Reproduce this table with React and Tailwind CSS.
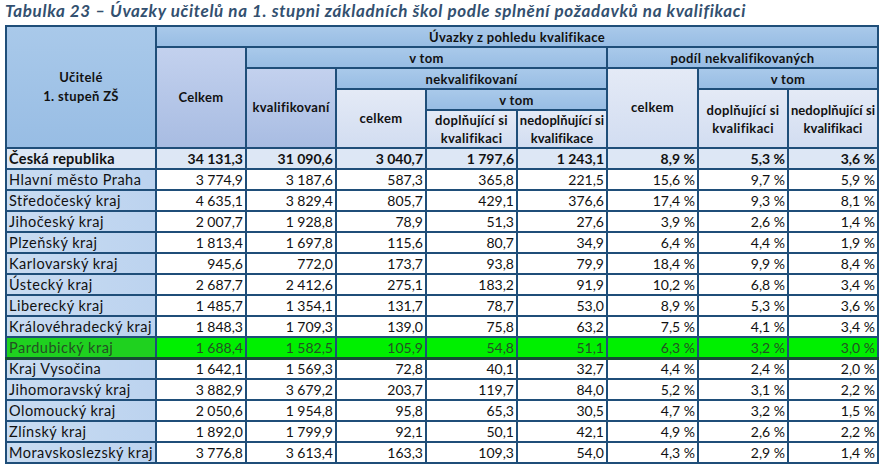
import React from "react";

const rows = [
  ["Česká republika", "34 131,3", "31 090,6", "3 040,7", "1 797,6", "1 243,1", "8,9 %", "5,3 %", "3,6 %"],
  ["Hlavní město Praha", "3 774,9", "3 187,6", "587,3", "365,8", "221,5", "15,6 %", "9,7 %", "5,9 %"],
  ["Středočeský kraj", "4 635,1", "3 829,4", "805,7", "429,1", "376,6", "17,4 %", "9,3 %", "8,1 %"],
  ["Jihočeský kraj", "2 007,7", "1 928,8", "78,9", "51,3", "27,6", "3,9 %", "2,6 %", "1,4 %"],
  ["Plzeňský kraj", "1 813,4", "1 697,8", "115,6", "80,7", "34,9", "6,4 %", "4,4 %", "1,9 %"],
  ["Karlovarský kraj", "945,6", "772,0", "173,7", "93,8", "79,9", "18,4 %", "9,9 %", "8,4 %"],
  ["Ústecký kraj", "2 687,7", "2 412,6", "275,1", "183,2", "91,9", "10,2 %", "6,8 %", "3,4 %"],
  ["Liberecký kraj", "1 485,7", "1 354,1", "131,7", "78,7", "53,0", "8,9 %", "5,3 %", "3,6 %"],
  ["Královéhradecký kraj", "1 848,3", "1 709,3", "139,0", "75,8", "63,2", "7,5 %", "4,1 %", "3,4 %"],
  ["Pardubický kraj", "1 688,4", "1 582,5", "105,9", "54,8", "51,1", "6,3 %", "3,2 %", "3,0 %"],
  ["Kraj Vysočina", "1 642,1", "1 569,3", "72,8", "40,1", "32,7", "4,4 %", "2,4 %", "2,0 %"],
  ["Jihomoravský kraj", "3 882,9", "3 679,2", "203,7", "119,7", "84,0", "5,2 %", "3,1 %", "2,2 %"],
  ["Olomoucký kraj", "2 050,6", "1 954,8", "95,8", "65,3", "30,5", "4,7 %", "3,2 %", "1,5 %"],
  ["Zlínský kraj", "1 892,0", "1 799,9", "92,1", "50,1", "42,1", "4,9 %", "2,6 %", "2,2 %"],
  ["Moravskoslezský kraj", "3 776,8", "3 613,4", "163,3", "109,3", "54,0", "4,3 %", "2,9 %", "1,4 %"],
];

const nb = (s) => s.replace(/ /g, "\u00a0");

const B = "border-2 border-[#1f4e79]";
const base = `${B} text-center align-middle font-bold px-0 py-0 whitespace-nowrap`;
const blue = `${base} bg-gradient-to-b from-[#a9c9ea] to-[#98bde4] leading-[16px]`;
const lav = `${base} bg-gradient-to-b from-[#c3d1ee] to-[#a8bce2]`;
const light = `${base} bg-gradient-to-b from-[#e4eaf6] to-[#d2ddf1]`;

export default function App() {
  return (
    <div className="w-[883px] h-[469px] bg-white overflow-hidden text-[#111]" style={{ fontFamily: "Lato, 'Liberation Sans', sans-serif" }}>
      <div className="h-[25px] pl-[5px] text-[17px] leading-[22px] font-bold italic tracking-[0.65px] text-[#33506f] whitespace-nowrap">
        Tabulka 23 – Úvazky učitelů na 1. stupni základních škol podle splnění požadavků na kvalifikaci
      </div>
      <table className="ml-[5px] border-collapse table-fixed w-[872px] text-[13px] tracking-[0.35px]">
        <colgroup>
          <col className="w-[150px]" />
          <col className="w-[90px]" />
          <col className="w-[90px]" />
          <col className="w-[90px]" />
          <col className="w-[91px]" />
          <col className="w-[90px]" />
          <col className="w-[91px]" />
          <col className="w-[90px]" />
          <col className="w-[90px]" />
        </colgroup>
        <thead>
          <tr className="h-[21px]">
            <th rowSpan={5} className={`${blue} leading-[19px]`}>
              Učitelé
              <br />
              1. stupeň ZŠ
            </th>
            <th colSpan={8} className={blue}>Úvazky z pohledu kvalifikace</th>
          </tr>
          <tr className="h-[21px]">
            <th rowSpan={4} className={lav}>Celkem</th>
            <th colSpan={4} className={blue}>v tom</th>
            <th colSpan={3} className={blue}>podíl nekvalifikovaných</th>
          </tr>
          <tr className="h-[21px]">
            <th rowSpan={3} className={lav}>kvalifikovaní</th>
            <th colSpan={3} className={blue}>nekvalifikovaní</th>
            <th rowSpan={3} className={light}>celkem</th>
            <th colSpan={2} className={blue}>v tom</th>
          </tr>
          <tr className="h-[21px]">
            <th rowSpan={2} className={light}>celkem</th>
            <th colSpan={2} className={blue}>v tom</th>
            <th rowSpan={2} className={`${light} leading-[18px]`}>
              doplňující si
              <br />
              kvalifikaci
            </th>
            <th rowSpan={2} className={`${light} leading-[18px] tracking-[0.1px]`}>
              nedoplňující si
              <br />
              kvalifikaci
            </th>
          </tr>
          <tr className="h-[36px]">
            <th className={`${light} leading-[18px]`}>
              doplňující si
              <br />
              kvalifikaci
            </th>
            <th className={`${light} leading-[18px] tracking-[0.1px]`}>
              nedoplňující si
              <br />
              kvalifikace
            </th>
          </tr>
        </thead>
        <tbody className="text-[14px] leading-[17px] tracking-normal">
          {rows.map((r, i) => {
            const total = i === 0;
            const green = r[0] === "Pardubický kraj";
            return (
              <tr key={i} className={`h-[21px] ${total ? "font-bold" : ""} ${green ? "text-[#245024]" : ""}`}>
                {r.map((c, j) => {
                  let bg;
                  if (green) bg = j === 0 ? "bg-[#1fd11f]" : "bg-[#00f000]";
                  else if (total) bg = "bg-[#dde7f5]";
                  else bg = j === 0 ? "bg-gradient-to-r from-[#c9dcf2] to-[#bcd3ef]" : "bg-white";
                  const bb = green ? "border-b-[3px] border-b-[#174a33]" : "";
                  const first = j === 0
                    ? `text-left pl-[2px] text-[14.5px] ${total ? "tracking-[0.25px]" : "tracking-[0.5px]"}`
                    : "text-right pr-[2px]";
                  return (
                    <td
                      key={j}
                      className={`${B} ${bg} ${bb} whitespace-nowrap overflow-hidden ${first} py-0 align-middle`}
                    >
                      {nb(c)}
                    </td>
                  );
                })}
              </tr>
            );
          })}
        </tbody>
      </table>
    </div>
  );
}
